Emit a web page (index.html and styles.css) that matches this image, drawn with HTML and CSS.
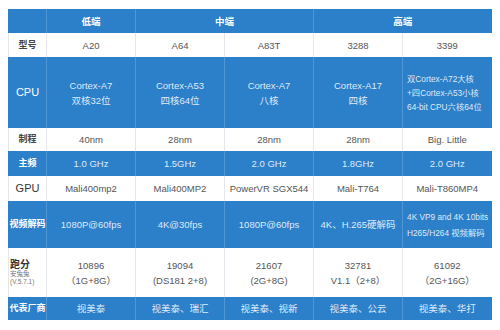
FILE: index.html
```html
<!DOCTYPE html>
<html lang="zh">
<head>
<meta charset="utf-8">
<link rel="stylesheet" href="styles.css">
</head>
<body>
<table class="spec">
  <colgroup>
    <col class="c-label"><col class="c"><col class="c"><col class="c"><col class="c"><col class="c">
  </colgroup>
  <tr class="blue head">
    <td></td>
    <td>低端</td>
    <td colspan="2">中端</td>
    <td colspan="2">高端</td>
  </tr>
  <tr class="white r-model">
    <th>型号</th>
    <td>A20</td><td>A64</td><td>A83T</td><td>3288</td><td>3399</td>
  </tr>
  <tr class="blue r-cpu">
    <th class="big">CPU</th>
    <td>Cortex-A7<br>双核32位</td>
    <td>Cortex-A53<br>四核64位</td>
    <td>Cortex-A7<br>八核</td>
    <td>Cortex-A17<br>四核</td>
    <td class="left">双Cortex-A72大核<br>+四Cortex-A53小核<br>64-bit CPU六核64位</td>
  </tr>
  <tr class="white r-proc">
    <th>制程</th>
    <td>40nm</td><td>28nm</td><td>28nm</td><td>28nm</td><td>Big. Little</td>
  </tr>
  <tr class="blue r-freq">
    <th>主频</th>
    <td>1.0 GHz</td><td>1.5GHz</td><td>2.0 GHz</td><td>1.8GHz</td><td>2.0 GHz</td>
  </tr>
  <tr class="white r-gpu">
    <th class="big plain">GPU</th>
    <td>Mali400mp2</td><td>Mali400MP2</td><td>PowerVR SGX544</td><td>Mali-T764</td><td>Mali-T860MP4</td>
  </tr>
  <tr class="blue r-video">
    <th>视频解码</th>
    <td>1080P@60fps</td><td>4K@30fps</td><td>1080P@60fps</td><td>4K、H.265硬解码</td>
    <td class="left">4K VP9 and 4K 10bits<br>H265/H264 视频解码</td>
  </tr>
  <tr class="white r-score">
    <th class="left"><span class="score">跑分</span><span class="sub">安兔兔<br>(V.5.7.1)</span></th>
    <td>10896<br>（1G+8G）</td>
    <td>19094<br>(DS181 2+8)</td>
    <td>21607<br>(2G+8G)</td>
    <td>32781<br>V1.1（2+8）</td>
    <td>61092<br>（2G+16G）</td>
  </tr>
  <tr class="blue r-vendor">
    <th>代表厂商</th>
    <td>视美泰</td><td>视美泰、瑞汇</td><td>视美泰、视新</td><td>视美泰、公云</td><td>视美泰、华打</td>
  </tr>
</table>
</body>
</html>
```
FILE: styles.css
```css
html, body {
  margin: 0;
  padding: 0;
  background: #ffffff;
}
body {
  padding: 9px 0 0 8px;
  font-family: "Liberation Sans", "Noto Sans CJK SC", sans-serif;
}
.spec {
  border-collapse: collapse;
  table-layout: fixed;
  width: 483px;
  font-size: 9.5px;
  line-height: 15px;
}
.c-label { width: 38px; }
.c { width: 89px; }
.spec td, .spec th {
  padding: 0;
  text-align: center;
  vertical-align: middle;
  overflow: hidden;
  white-space: nowrap;
}
.spec th {
  font-weight: bold;
  font-size: 9px;
}
.blue { background: #2c80c9; }
.blue td {
  color: rgba(255,255,255,0.86);
  border-left: 1px solid #4f96d3;
}
.blue th { color: #ffffff; border-left: 1px solid #2c80c9; }
.white { background: #ffffff; }
.white td {
  color: #555555;
  border-left: 1px solid #e3e6ea;
}
.white th { color: #444444; border-left: 1px solid #e3e6ea; }
.head td { color: #ffffff; font-weight: bold; font-size: 9.5px; }
.head td:first-child { border-left: 1px solid #2c80c9; }
.big { font-size: 11px !important; font-weight: normal !important; }
.blue .big { color: #ffffff; }
.white .big { color: #333333; }
.left { text-align: left !important; padding-left: 4px !important; }
.head { height: 24px; }
.r-model { height: 24px; }
.r-cpu { height: 71px; }
.r-proc { height: 23px; }
.r-freq { height: 25px; }
.r-gpu { height: 25px; }
.r-video { height: 47px; }
.r-score { height: 49px; }
.r-vendor { height: 23px; }
.r-cpu td.left { line-height: 14px; font-size: 8.3px; }
.r-video td.left { line-height: 16px; font-size: 8.3px; }
.r-score th.left { padding-left: 1px !important; line-height: 10px; }
.score { display: block; font-size: 10px; color: #333333; }
.sub { display: block; font-size: 6.5px; font-weight: normal; color: #777777; line-height: 8px; }
```
